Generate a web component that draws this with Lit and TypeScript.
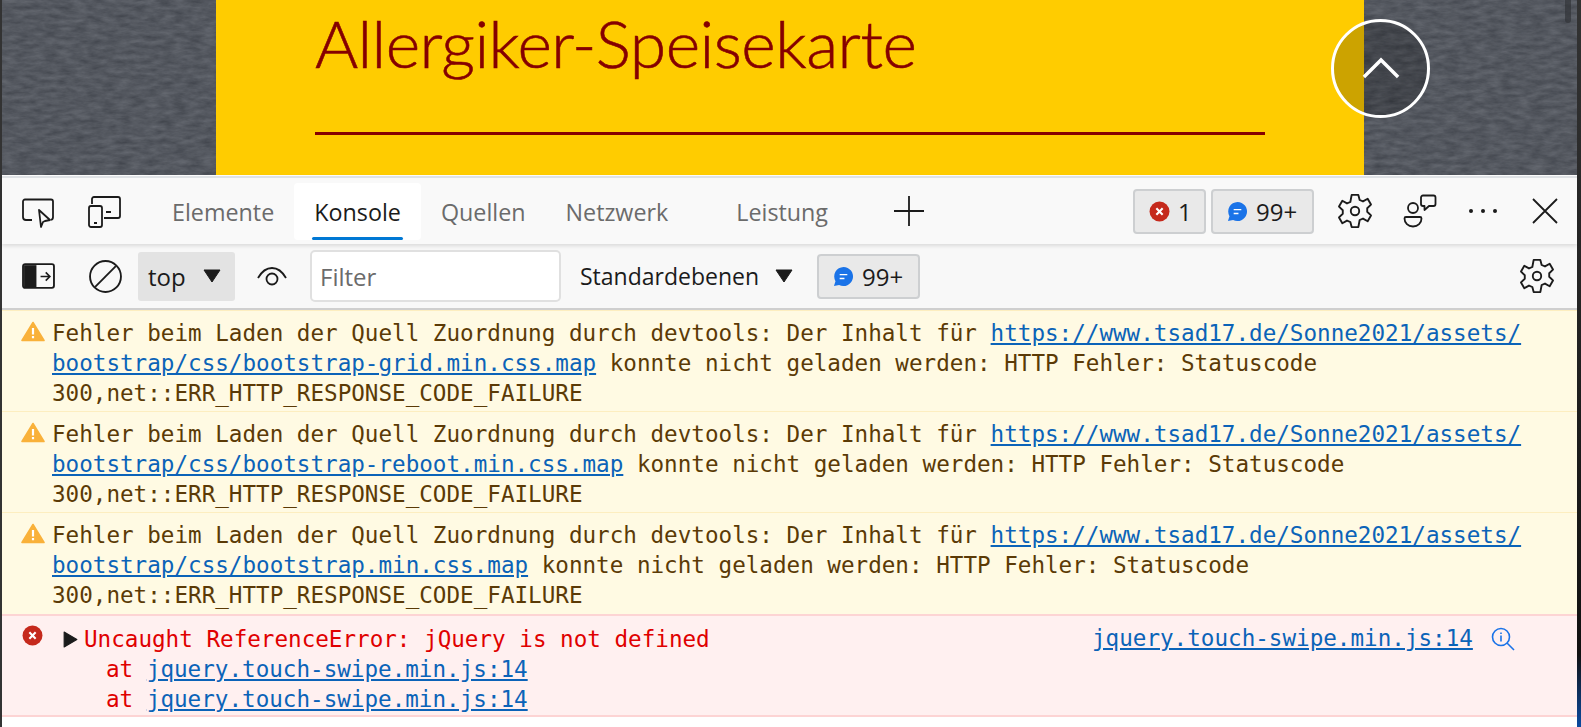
import { LitElement, html, css } from "lit";
import { customElement } from "lit/decorators.js";

const gear = html`<svg class="gear" viewBox="0 0 36 36" width="40" height="40"><path d="M15 3.500h6l1.200 4.600 3 1.300 4.200-2.400 3 5.200-3.400 3.300v3.200l3.400 3.300-3 5.200-4.200-2.400-3 1.300L21 32.500h-6l-1.200-4.600-3-1.300-4.200 2.400-3-5.200 3.400-3.300v-3.200l-3.400-3.300 3-5.200 4.200 2.400 3-1.300z" fill="none" stroke="#1b1b1b" stroke-width="1.700" stroke-linejoin="round"/><circle cx="18" cy="18" r="3.800" fill="none" stroke="#1b1b1b" stroke-width="1.700"/></svg>`;
const bubble = html`<svg viewBox="0 0 22 22" width="21" height="21"><path d="M11 1a10 10 0 1 1-4.600 18.900L1 21l1.600-5A10 10 0 0 1 11 1z" fill="#1a73e8"/><path d="M7 9h8M7 13h5" stroke="#fff" stroke-width="1.500"/></svg>`;
const errIcon = html`<svg viewBox="0 0 20 20" width="21" height="21"><circle cx="10" cy="10" r="9.500" fill="#c5291c"/><path d="M7 7l6 6M13 7l-6 6" stroke="#fff" stroke-width="2"/></svg>`;
const warn = html`<svg viewBox="0 0 24 20" width="24" height="21"><path d="M12 1L23 19H1z" fill="#f9b13a" stroke="#f9b13a" stroke-width="1.600" stroke-linejoin="round"/><path d="M12 6.500v6.500M12 14.500v2.200" stroke="#fff" stroke-width="2.200"/></svg>`;
const caret = html`<svg viewBox="0 0 18 14" width="18" height="14"><path d="M1 1h16L9 13z" fill="#1b1b1b" stroke="#1b1b1b" stroke-linejoin="round"/></svg>`;

@customElement("app-root")
export class AppRoot extends LitElement {
  static styles = css`
    :host { display: block; width: 1581px; height: 727px; overflow: hidden; background: #fff; font-family: "Open Sans", "Noto Sans", sans-serif; }
    svg { display: block; flex: none; }
    .frame { display: flex; height: 727px; }
    .edgeL { width: 2px; background: #333; flex: none; }
    .edgeR { width: 4px; background: linear-gradient(180deg, #333, #111 90%, #0a4aa0 100%); flex: none; }
    .main { flex: 1; min-width: 0; display: flex; flex-direction: column; }
    .page { height: 176px; box-sizing: border-box; border-bottom: 1px solid #fff; flex: none; position: relative; display: flex; background: #565a61; overflow: hidden; }
    .tex { position: absolute; inset: 0; }
    .panel { position: relative; margin-left: 214px; width: 1148px; background: #ffcc00; color: #850000; padding: 0 99px; box-sizing: border-box; }
    .title { font-family: "Lato", sans-serif; font-weight: 300; font-size: 66px; line-height: 66px; height: 132px; padding-top: 10px; box-sizing: border-box; letter-spacing: -0.500px; -webkit-text-stroke: 0.6px #850000; white-space: nowrap; }
    .rule { height: 2.500px; background: #850000; }
    .top { position: absolute; left: 1329px; top: 19px; width: 99px; height: 99px; box-sizing: border-box; border: 3px solid #fff; border-radius: 50%; background: rgba(0,0,0,.2); display: flex; align-items: center; justify-content: center; }
    .thumb { position: absolute; left: 1563px; top: 0; width: 6px; height: 23px; border-radius: 0 0 3px 3px; background: rgba(40,42,46,.55); }
    .bar1 { flex: none; border-top: 2px solid #dfe2e5; background: #f9f9f9; height: 68px; box-sizing: border-box; display: flex; align-items: center; position: relative; box-shadow: 0 2px 4px rgba(0,0,0,.12); z-index: 2; }
    .bar2 { flex: none; background: #f8f8f8; height: 66px; box-sizing: border-box; border-bottom: 2px solid #cfcfcf; display: flex; align-items: center; }
    .inspect { margin-left: 18px; }
    .device { margin-left: 30px; }
    .tabs { display: flex; align-items: stretch; height: 57px; margin-left: 30px; align-self: flex-end; margin-bottom: 4px; }
    .tab { font-size: 23.300px; color: #6b6b6b; display: flex; align-items: center; padding: 0 20px; position: relative; white-space: nowrap; }
    .tab.on { color: #1b1b1b; background: #fff; border-radius: 4px; }
    .tab.on::after { content: ""; position: absolute; left: 18px; right: 18px; bottom: 0; height: 3px; border-radius: 2px; background: #0078d4; }
    .tab.far { margin-left: 28px; }
    .plus { margin-left: 44px; }
    .grow { flex: 1; }
    .badge { display: flex; align-items: center; gap: 8px; height: 45px; box-sizing: border-box; background: #e9e9e9; border: 2px solid #cdcfd1; border-radius: 4px; font-size: 24px; color: #1b1b1b; padding: 0 14px; }
    .b-err { width: 73px; }
    .b-info { width: 103px; margin-left: 5px; }
    .gear1 { margin-left: 21px; }
    .person { margin-left: 27px; }
    .dots { margin-left: 30px; }
    .close { margin-left: 34px; margin-right: 19px; }
    .panelbtn { margin-left: 20px; }
    .clear { margin-left: 34px; }
    .ctx { margin-left: 16px; width: 97px; height: 49px; background: #e3e3e3; border-radius: 3px; display: flex; align-items: center; justify-content: space-between; box-sizing: border-box; padding: 0 14px 0 10px; font-size: 24px; color: #1b1b1b; }
    .eye { margin-left: 21px; }
    .filter { margin-left: 22px; width: 251px; height: 52px; box-sizing: border-box; background: #fff; border: 2px solid #e0e0e0; border-radius: 5px; padding: 0 8px; display: flex; align-items: center; font-size: 24px; color: #6b6b6b; }
    .levels { margin-left: 19px; font-size: 23px; color: #1b1b1b; display: flex; align-items: center; gap: 16px; }
    .b-bar2 { margin-left: 24px; width: 103px; }
    .gear2 { margin-right: 20px; }
    .msgs { flex: 1; display: flex; flex-direction: column; font-family: "DejaVu Sans Mono", monospace; font-size: 22.600px; line-height: 29.800px; }
    .msg { display: grid; grid-template-columns: 50px 1fr; box-sizing: border-box; background: #fffae3; color: #5b3a06; border-top: 1px solid #fdeec0; height: 101px; padding-top: 8px; white-space: nowrap; }
    .msg:nth-child(3) { height: 102px; }
    .ico { padding: 2px 0 0 19px; }
    a { color: #0b63b8; text-decoration: underline; }
    p { margin: 0; }
    .err { background: #fff0f0; border-top: 2px solid #fdd4d4; border-bottom: 2px solid #fdd4d4; color: #e00000; height: 103px; box-sizing: border-box; display: grid; grid-template-columns: 61px 1fr; padding-top: 8px; position: relative; white-space: nowrap; }
    .err .ico { padding: 1px 0 0 20px; }
    .row { display: flex; align-items: center; height: 30.800px; }
    .tri { margin-right: 6px; }
    .at { padding-left: 43px; white-space: pre; }
    .src { position: absolute; left: 1090px; top: 8px; display: flex; align-items: center; gap: 18px; }
  `;

  line(a: string) {
    return html`<div class="msg">
      <div class="ico">${warn}</div>
      <p>Fehler beim Laden der Quell Zuordnung durch devtools: Der Inhalt für <a>https://www.tsad17.de/Sonne2021/assets/</a><br><a>${a}</a> konnte nicht geladen werden: HTTP Fehler: Statuscode<br>300,net::ERR_HTTP_RESPONSE_CODE_FAILURE</p>
    </div>`;
  }

  render() {
    return html`<div class="frame"><div class="edgeL"></div><div class="main">
      <div class="page">
        <svg class="tex" width="1577" height="175"><defs><filter id="n" x="0" y="0" width="100%" height="100%" color-interpolation-filters="sRGB"><feTurbulence type="fractalNoise" baseFrequency="0.07 0.2" numOctaves="4" seed="5"/><feColorMatrix values="0.16 0 0 0 0.25 0.16 0 0 0 0.265 0.16 0 0 0 0.295 0 0 0 0 1"/></filter></defs><rect width="1577" height="175" filter="url(#n)"/></svg>
        <div class="panel">
          <div class="title">Allergiker-Speisekarte</div>
          <div class="rule"></div>
        </div>
        <div class="top"><svg viewBox="0 0 40 24" width="38" height="23"><path d="M2 21L20 3l18 18" fill="none" stroke="#fff" stroke-width="3.600"/></svg></div>
        <div class="thumb"></div>
      </div>
      <div class="bar1">
        <svg class="inspect" viewBox="0 0 36 36" width="36" height="36"><path d="M12 27H6a3 3 0 0 1-3-3V8.500a2 2 0 0 1 2-2h26a2 2 0 0 1 2 2V24a3 3 0 0 1-2 3" fill="none" stroke="#1b1b1b" stroke-width="1.800"/><path d="M19 17l11 10-5 1-2 1-2 5z" fill="#f9f9f9" stroke="#1b1b1b" stroke-width="1.800" stroke-linejoin="round"/></svg>
        <svg class="device" viewBox="0 0 36 36" width="36" height="36"><path d="M6 11V6a2 2 0 0 1 2-2h24a2 2 0 0 1 2 2v17a2 2 0 0 1-2 2H18" fill="none" stroke="#1b1b1b" stroke-width="1.800"/><rect x="3" y="13" width="13" height="21" rx="2" fill="none" stroke="#1b1b1b" stroke-width="1.800"/><path d="M8 30h3M20 19h5" stroke="#1b1b1b" stroke-width="1.800"/></svg>
        <div class="tabs">
          <div class="tab">Elemente</div>
          <div class="tab on">Konsole</div>
          <div class="tab">Quellen</div>
          <div class="tab">Netzwerk</div>
          <div class="tab far">Leistung</div>
        </div>
        <svg class="plus" viewBox="0 0 34 34" width="34" height="34"><path d="M17 2v30M2 17h30" stroke="#1b1b1b" stroke-width="1.800"/></svg>
        <div class="grow"></div>
        <div class="badge b-err">${errIcon}<span>1</span></div>
        <div class="badge b-info">${bubble}<span>99+</span></div>
        <span class="gear1">${gear}</span>
        <svg class="person" viewBox="0 0 36 36" width="36" height="36"><circle cx="11" cy="15" r="5" fill="none" stroke="#1b1b1b" stroke-width="1.800"/><path d="M4 24h14a1.500 1.500 0 0 1 1.500 1.500C19.500 30 16 33.500 11 33.500S2.500 30 2.500 25.500A1.500 1.500 0 0 1 4 24z" fill="none" stroke="#1b1b1b" stroke-width="1.800" stroke-linejoin="round"/><path d="M21 2.500h10.500a2 2 0 0 1 2 2v6.500a2 2 0 0 1-2 2h-4.500l-4.500 4v-4h-1.500a2 2 0 0 1-2-2V4.500a2 2 0 0 1 2-2z" fill="none" stroke="#1b1b1b" stroke-width="1.800" stroke-linejoin="round"/></svg>
        <svg class="dots" viewBox="0 0 30 8" width="30" height="8"><circle cx="3" cy="4" r="2" fill="#1b1b1b"/><circle cx="15" cy="4" r="2" fill="#1b1b1b"/><circle cx="27" cy="4" r="2" fill="#1b1b1b"/></svg>
        <svg class="close" viewBox="0 0 26 26" width="26" height="26"><path d="M1 1l24 24M25 1L1 25" stroke="#1b1b1b" stroke-width="1.800"/></svg>
      </div>
      <div class="bar2">
        <svg class="panelbtn" viewBox="0 0 32 26" width="33" height="27"><rect x="1" y="1" width="30" height="23" rx="2" fill="none" stroke="#1b1b1b" stroke-width="1.800"/><path d="M2 2h12v22H2z" fill="#1b1b1b"/><path d="M18 13h8M23 9l4 4-4 4" fill="none" stroke="#1b1b1b" stroke-width="1.600"/></svg>
        <svg class="clear" viewBox="0 0 32 32" width="33" height="33"><circle cx="16" cy="16" r="15" fill="none" stroke="#1b1b1b" stroke-width="1.800"/><path d="M6 26L26 6" stroke="#1b1b1b" stroke-width="1.800"/></svg>
        <div class="ctx">top ${caret}</div>
        <svg class="eye" viewBox="0 0 32 24" width="32" height="24"><path d="M2 14C6 7 11 4 16 4s10 3 14 10" fill="none" stroke="#1b1b1b" stroke-width="1.800"/><circle cx="16" cy="15" r="5.500" fill="none" stroke="#1b1b1b" stroke-width="1.800"/></svg>
        <div class="filter">Filter</div>
        <div class="levels">Standardebenen ${caret}</div>
        <div class="badge b-bar2">${bubble}<span>99+</span></div>
        <div class="grow"></div>
        <span class="gear2">${gear}</span>
      </div>
      <div class="msgs">
        ${this.line("bootstrap/css/bootstrap-grid.min.css.map")}
        ${this.line("bootstrap/css/bootstrap-reboot.min.css.map")}
        ${this.line("bootstrap/css/bootstrap.min.css.map")}
        <div class="err">
          <div class="ico">${errIcon}</div>
          <div>
            <div class="row"><svg class="tri" viewBox="0 0 14 16" width="15" height="17"><path d="M1 1l12 7-12 7z" fill="#1b1b1b" stroke="#1b1b1b" stroke-linejoin="round"/></svg>Uncaught ReferenceError: jQuery is not defined</div>
            <div class="at">at <a>jquery.touch-swipe.min.js:14</a></div>
            <div class="at">at <a>jquery.touch-swipe.min.js:14</a></div>
          </div>
          <div class="src"><a>jquery.touch-swipe.min.js:14</a><svg viewBox="0 0 24 24" width="24" height="24"><circle cx="10" cy="10" r="8.500" fill="none" stroke="#1a73e8" stroke-width="1.600"/><path d="M16 16l7 7" stroke="#1a73e8" stroke-width="1.600"/><path d="M10 8.500v6M10 5.500v1.500" stroke="#1a73e8" stroke-width="1.600"/></svg></div>
        </div>
      </div>
    </div><div class="edgeR"></div></div>`;
  }
}
